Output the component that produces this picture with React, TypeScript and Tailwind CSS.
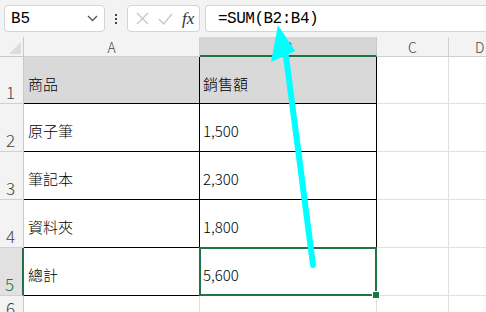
import React from "react";

const font = { fontFamily: '"PMingLiU","Noto Sans CJK TC","Noto Sans CJK SC",sans-serif' };

const rows = [
    { n: "1", a: "商品", b: "銷售額" },
    { n: "2", a: "原子筆", b: "1,500" },
    { n: "3", a: "筆記本", b: "2,300" },
    { n: "4", a: "資料夾", b: "1,800" },
    { n: "5", a: "總計", b: "5,600" },
];

export default function App() {
    return (
        <div className="relative w-[486px] h-[312px] overflow-hidden bg-white text-black" style={font}>
            {/* formula bar */}
            <div className="h-[37px] bg-[#f3f3f3] flex items-center pl-[4px]">
                <div className="w-[101px] h-[27px] bg-white border border-[#d4d4d4] rounded-[4px] flex items-center justify-between pl-[6px] pr-[6px]">
                    <span className="text-[16px] leading-none" style={{ fontFamily: '"Liberation Mono",monospace' }}>B5</span>
                    <svg width="11" height="7" viewBox="0 0 11 7"><path d="M1 1l4.5 4.5L10 1" fill="none" stroke="#555" strokeWidth="1.3" /></svg>
                </div>
                <div className="w-[22px] flex flex-col items-center gap-[2px]">
                    <span className="w-[2px] h-[2px] bg-[#444]" />
                    <span className="w-[2px] h-[2px] bg-[#444]" />
                    <span className="w-[2px] h-[2px] bg-[#444]" />
                </div>
                <div className="w-[73px] h-[27px] bg-white border border-[#d4d4d4] rounded-[4px] flex items-center pl-[8px] gap-[9px]">
                    <svg width="13" height="13" viewBox="0 0 13 13"><path d="M1 1l11 11M12 1L1 12" stroke="#c4c4c4" strokeWidth="1.2" /></svg>
                    <svg width="15" height="12" viewBox="0 0 15 12"><path d="M1 6l4.5 5L14 1" fill="none" stroke="#c4c4c4" strokeWidth="1.2" /></svg>
                    <span className="italic text-[17px] leading-none text-[#333]" style={{ fontFamily: '"Liberation Serif",serif' }}>fx</span>
                </div>
                <div className="ml-[5px] flex-1 h-[27px] bg-white border border-r-0 border-[#d4d4d4] rounded-l-[4px] flex items-center pl-[12px]">
                    <span className="text-[16px] leading-none tracking-[-0.5px]" style={{ fontFamily: '"Liberation Mono",monospace' }}>=SUM(B2:B4)</span>
                </div>
            </div>

            {/* sheet */}
            <div className="grid grid-cols-[24px_176px_177px_72px_1fr] grid-rows-[20px_47px_48px_48px_48px_48px_20px]">
                <div className="bg-[#f3f3f3] border-r border-b border-[#c8c8c8] relative">
                    <svg className="absolute right-[2px] bottom-[2px]" width="12" height="12" viewBox="0 0 12 12"><path d="M12 0V12H0Z" fill="#dcdcdc" /></svg>
                </div>
                <div className="bg-[#f3f3f3] border-r border-b border-[#d0d0d0] flex items-end justify-center text-[14px] text-[#444] font-light leading-none pb-[2px]">A</div>
                <div className="bg-[#d6d6d6] border-r border-[#c8c8c8] border-b-2 border-b-[#217346] flex items-end justify-center text-[14px] text-[#333] font-light leading-none pb-[1px]">B</div>
                <div className="bg-[#f3f3f3] border-r border-b border-[#d0d0d0] flex items-end justify-center text-[14px] text-[#444] font-light leading-none pb-[2px]">C</div>
                <div className="bg-[#f3f3f3] border-b border-[#d0d0d0] flex items-end pl-[26px] text-[14px] text-[#444] font-light leading-none pb-[2px]">D</div>

                {rows.map((r, i) => {
                    const sel = r.n === "5";
                    return (
                        <React.Fragment key={r.n}>
                            <div className={sel
                                ? "bg-[#e1e1e1] border-r-2 border-r-[#217346] border-b border-b-[#d0d0d0] flex items-end pl-[5px] text-[17px] text-[#217346] font-light leading-none pb-[3px]"
                                : "bg-[#f3f3f3] border-r border-b border-[#d0d0d0] border-r-[#c8c8c8] flex items-end pl-[6px] text-[17px] text-[#444] font-light leading-none pb-[3px]"}>{r.n}</div>
                            <div className={`${i === 0 ? "bg-[#d9d9d9]" : "bg-white"} border-r border-b border-black flex items-center pl-[4px] pt-[6px] text-[15px] font-light leading-none`}>{r.a}</div>
                            <div className={`${i === 0 ? "bg-[#d9d9d9]" : "bg-white"} border-r border-b border-black flex items-center pl-[3px] pt-[6px] text-[15px] font-light leading-none relative`}>
                                {r.b}
                                {sel && (
                                    <>
                                        <div className="absolute left-[-1px] top-[-1px] right-[-1px] bottom-[-1px] border-2 border-[#217346]" />
                                        <div className="absolute right-[-4px] bottom-[-4px] w-[6px] h-[6px] bg-[#217346] border border-white box-content" />
                                    </>
                                )}
                            </div>
                            <div className="border-r border-b border-[#e1e1e1]" />
                            <div className="border-b border-[#e1e1e1]" />
                        </React.Fragment>
                    );
                })}
                <div className="bg-[#f3f3f3] border-r border-[#c8c8c8] flex items-start pl-[6px] text-[17px] text-[#444] font-light leading-none pt-[3px]">6</div>
                <div className="border-r border-[#e1e1e1]" />
                <div className="border-r border-[#e1e1e1]" />
                <div className="border-r border-[#e1e1e1]" />
                <div />
            </div>

            {/* annotation arrow */}
            <svg className="absolute left-0 top-0 pointer-events-none" width="486" height="312" viewBox="0 0 486 312">
                <line x1="313" y1="265" x2="286" y2="56" stroke="#00ffff" strokeWidth="6" strokeLinecap="round" />
                <polygon points="278,25 271,62 295,51" fill="#00ffff" />
            </svg>
        </div>
    );
}
